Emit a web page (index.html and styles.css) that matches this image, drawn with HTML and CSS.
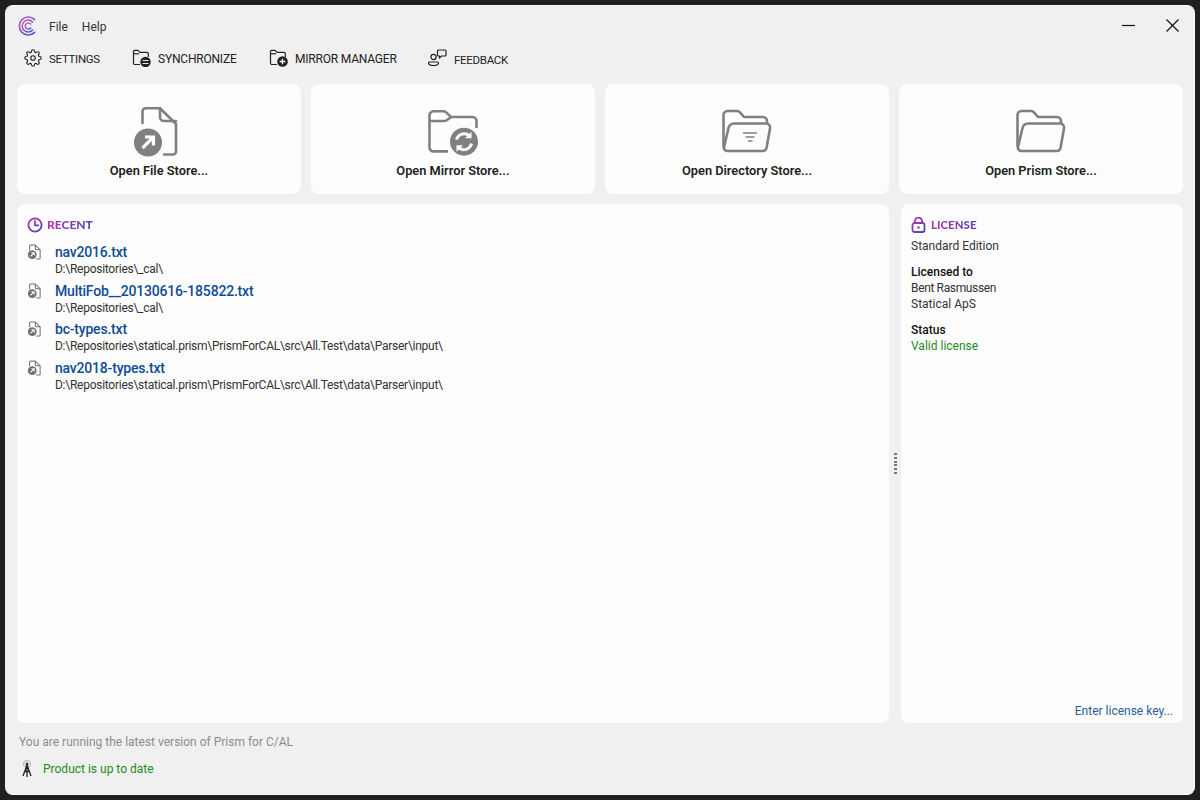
FILE: index.html
```html
<!DOCTYPE html>
<html lang="en">
<head>
<meta charset="utf-8">
<title>Prism for C/AL</title>
<link rel="stylesheet" href="styles.css">
</head>
<body>
<svg class="defs" width="0" height="0" aria-hidden="true">
  <defs>
    <linearGradient id="grad" x1="0" y1="0" x2="1" y2="1">
      <stop offset="0" stop-color="#b534b0"/>
      <stop offset="1" stop-color="#4a45b5"/>
    </linearGradient>
    <linearGradient id="logo" x1="0" y1="0" x2="1" y2="1">
      <stop offset="0" stop-color="#d65aa8"/>
      <stop offset="0.5" stop-color="#8a55c8"/>
      <stop offset="1" stop-color="#2f62d0"/>
    </linearGradient>
  </defs>
</svg>
<div class="window">
  <header class="titlebar">
    <svg class="logo" width="20" height="20" viewBox="0 0 20 20" fill="none" stroke="url(#logo)" stroke-linecap="round">
      <path d="M16.6 3.600A9 9 0 1 0 16.600 16.400" stroke-width="1.700"/>
      <path d="M14.600 6A6 6 0 1 0 14.600 14" stroke-width="1.500"/>
      <path d="M12.800 8A3.100 3.100 0 1 0 12.800 12" stroke-width="1.400"/>
    </svg>
    <nav class="menu"><span>File</span><span>Help</span></nav>
    <div class="controls">
      <svg width="13" height="3" viewBox="0 0 13 3"><path d="M0 1.500H13" stroke="#111" stroke-width="1.200"/></svg>
      <svg width="13" height="13" viewBox="0 0 13 13"><path d="M.5.5L12.500 12.500M12.500.5L.5 12.500" stroke="#111" stroke-width="1.200"/></svg>
    </div>
  </header>

  <nav class="toolbar">
    <div class="tool tool-settings">
      <svg width="18" height="18" viewBox="0 0 24 24" fill="none" stroke="#222" stroke-width="1.500" stroke-linejoin="round">
        <circle cx="12" cy="12" r="3"/>
        <path d="M19.400 15a1.650 1.650 0 0 0 .33 1.820l.06.06a2 2 0 0 1 0 2.830 2 2 0 0 1-2.830 0l-.06-.06a1.650 1.650 0 0 0-1.820-.33 1.650 1.650 0 0 0-1 1.510V21a2 2 0 0 1-2 2 2 2 0 0 1-2-2v-.09A1.650 1.650 0 0 0 9 19.400a1.650 1.650 0 0 0-1.820.33l-.06.06a2 2 0 0 1-2.830 0 2 2 0 0 1 0-2.830l.06-.06a1.650 1.650 0 0 0 .33-1.820 1.650 1.650 0 0 0-1.510-1H3a2 2 0 0 1-2-2 2 2 0 0 1 2-2h.09A1.650 1.650 0 0 0 4.600 9a1.650 1.650 0 0 0-.33-1.820l-.06-.06a2 2 0 0 1 0-2.830 2 2 0 0 1 2.830 0l.06.06a1.650 1.650 0 0 0 1.820.33H9a1.650 1.650 0 0 0 1-1.510V3a2 2 0 0 1 2-2 2 2 0 0 1 2 2v.09a1.650 1.650 0 0 0 1 1.510 1.650 1.650 0 0 0 1.820-.33l.06-.06a2 2 0 0 1 2.830 0 2 2 0 0 1 0 2.830l-.06.06a1.650 1.650 0 0 0-.33 1.820V9a1.650 1.650 0 0 0 1.510 1H21a2 2 0 0 1 2 2 2 2 0 0 1-2 2h-.09a1.650 1.650 0 0 0-1.510 1z"/>
      </svg>
      <span>SETTINGS</span>
    </div>
    <div class="tool tool-sync">
      <svg width="19" height="18" viewBox="0 0 19 18" fill="none" stroke="#222" stroke-width="1.200">
        <path d="M8 15.500H3a1.500 1.500 0 0 1-1.500-1.500V2.500A1.200 1.200 0 0 1 2.700 1.300H6L8 3.300h6.800a1.500 1.500 0 0 1 1.500 1.500V8"/>
        <path d="M1.500 4.800H7"/>
        <circle cx="13.500" cy="13" r="5.200" fill="#222" stroke="none"/>
        <path d="M10.500 11.500h6M10.500 14.500h6" stroke="#fff" stroke-width=".9"/>
      </svg>
      <span>SYNCHRONIZE</span>
    </div>
    <div class="tool tool-mirror">
      <svg width="19" height="18" viewBox="0 0 19 18" fill="none" stroke="#222" stroke-width="1.200">
        <path d="M8 15.500H3a1.500 1.500 0 0 1-1.500-1.500V2.500A1.200 1.200 0 0 1 2.700 1.300H6L8 3.300h6.800a1.500 1.500 0 0 1 1.500 1.500V8"/>
        <path d="M1.500 4.800H7"/>
        <circle cx="13.500" cy="12.500" r="5.300" fill="#222" stroke="none"/>
        <path d="M13.500 9.700v5.600M10.700 12.500h5.600" stroke="#fff" stroke-width="1.300"/>
      </svg>
      <span>MIRROR MANAGER</span>
    </div>
    <div class="tool tool-feedback">
      <svg width="19" height="18" viewBox="0 0 19 18" fill="none" stroke="#222" stroke-width="1.200" stroke-linejoin="round">
        <circle cx="5.500" cy="8" r="2.600"/>
        <path d="M1.500 13h8a1 1 0 0 1 1 1c0 1.500-1.500 2.500-5 2.500s-5-1-5-2.500a1 1 0 0 1 1-1z"/>
        <path d="M10.500 1h6.500a1 1 0 0 1 1 1v4a1 1 0 0 1-1 1h-3.500l-2 2V7h-1a1 1 0 0 1-1-1V2a1 1 0 0 1 1-1z"/>
      </svg>
      <span>FEEDBACK</span>
    </div>
  </nav>

  <section class="tiles">
    <button class="tile">
      <svg width="52" height="52" viewBox="0 0 52 52" fill="none" stroke="#808080" stroke-width="2.600" stroke-linejoin="round" stroke-linecap="round">
        <path d="M9.500 18V6.300a3 3 0 0 1 3-3H27L43 19v27.500a3 3 0 0 1-3 3H31"/>
        <path d="M27 3.300V12a4 4 0 0 0 4 4h12"/>
        <circle cx="15" cy="37.500" r="14" fill="#808080" stroke="none"/>
        <path d="M9.500 43L20 32.500M12 32h8.500v8.500" stroke="#fff" stroke-width="3.200" stroke-linecap="butt" stroke-linejoin="miter"/>
      </svg>
      <span>Open File Store...</span>
    </button>
    <button class="tile">
      <svg width="52" height="52" viewBox="0 0 52 52" fill="none" stroke="#808080" stroke-width="2.600" stroke-linejoin="round">
        <path d="M21 46.400H6.500a4 4 0 0 1-4-4V10.300a4 4 0 0 1 4-4h10a4 4 0 0 1 3 1.300L24 12h21.500a4 4 0 0 1 4 4v7"/>
        <path d="M2.500 16h15a4 4 0 0 0 3-1.300L24 12"/>
        <circle cx="37" cy="36.700" r="14" fill="#808080" stroke="none"/>
        <path d="M29.500 34.700a8 8 0 0 1 13-4" stroke="#fff" stroke-width="3"/>
        <path d="M44.500 38.700a8 8 0 0 1-13 4" stroke="#fff" stroke-width="3"/>
        <path d="M44.500 26.700v6.500H38zM29.500 46.700v-6.500H36z" fill="#fff" stroke="none"/>
      </svg>
      <span>Open Mirror Store...</span>
    </button>
    <button class="tile">
      <svg width="52" height="52" viewBox="0 0 52 52" fill="none" stroke="#808080" stroke-width="2.600" stroke-linejoin="round">
        <path d="M2.500 42V10a4 4 0 0 1 4-4h9.500a4 4 0 0 1 3 1.300L23 12h19a4 4 0 0 1 4 4v2.500"/>
        <path d="M2.800 43L7.500 23a6 6 0 0 1 5.500-4.500H45a4 4 0 0 1 4 5l-3.500 19.500a4 4 0 0 1-4 3H7a4 4 0 0 1-4.200-3z"/>
        <path d="M22 28h14M24.500 32h9M27 36h4.500" stroke-width="1.700"/>
      </svg>
      <span>Open Directory Store...</span>
    </button>
    <button class="tile">
      <svg width="52" height="52" viewBox="0 0 52 52" fill="none" stroke="#808080" stroke-width="2.600" stroke-linejoin="round">
        <path d="M2.500 42V10a4 4 0 0 1 4-4h9.500a4 4 0 0 1 3 1.300L23 12h19a4 4 0 0 1 4 4v2.500"/>
        <path d="M2.800 43L7.500 23a6 6 0 0 1 5.500-4.500H45a4 4 0 0 1 4 5l-3.500 19.500a4 4 0 0 1-4 3H7a4 4 0 0 1-4.200-3z"/>
      </svg>
      <span>Open Prism Store...</span>
    </button>
  </section>

  <main class="panels">
    <section class="panel recent">
      <h2 class="heading">
        <svg width="16" height="16" viewBox="0 0 16 16" fill="none" stroke="url(#grad)" stroke-width="1.800" stroke-linecap="round" stroke-linejoin="round">
          <circle cx="8" cy="8" r="6.600"/><path d="M8 4v4.300h3.300"/>
        </svg>
        <span class="grad">RECENT</span>
      </h2>
      <ul class="files">
        <li class="file">
          <svg class="file-icon" width="14" height="16" viewBox="0 0 16 18" fill="none" stroke="#707070" stroke-width="1.200" stroke-linejoin="round"><path d="M3 7V2a1 1 0 0 1 1-1h5.500L15 6.500V16a1 1 0 0 1-1 1h-3.500"/><path d="M9.500 1v4a1.500 1.500 0 0 0 1.500 1.500h4"/><circle cx="6" cy="12" r="5" fill="#707070" stroke="none"/><path d="M4 14l4-4M5 9.800h3.200V13" stroke="#fff"/></svg>
          <div><a class="file-name">nav2016.txt</a><div class="file-path">D:\Repositories\_cal\</div></div>
        </li>
        <li class="file">
          <svg class="file-icon" width="14" height="16" viewBox="0 0 16 18" fill="none" stroke="#707070" stroke-width="1.200" stroke-linejoin="round"><path d="M3 7V2a1 1 0 0 1 1-1h5.500L15 6.500V16a1 1 0 0 1-1 1h-3.500"/><path d="M9.500 1v4a1.500 1.500 0 0 0 1.500 1.500h4"/><circle cx="6" cy="12" r="5" fill="#707070" stroke="none"/><path d="M4 14l4-4M5 9.800h3.200V13" stroke="#fff"/></svg>
          <div><a class="file-name">MultiFob__20130616-185822.txt</a><div class="file-path">D:\Repositories\_cal\</div></div>
        </li>
        <li class="file">
          <svg class="file-icon" width="14" height="16" viewBox="0 0 16 18" fill="none" stroke="#707070" stroke-width="1.200" stroke-linejoin="round"><path d="M3 7V2a1 1 0 0 1 1-1h5.500L15 6.500V16a1 1 0 0 1-1 1h-3.500"/><path d="M9.500 1v4a1.500 1.500 0 0 0 1.500 1.500h4"/><circle cx="6" cy="12" r="5" fill="#707070" stroke="none"/><path d="M4 14l4-4M5 9.800h3.200V13" stroke="#fff"/></svg>
          <div><a class="file-name">bc-types.txt</a><div class="file-path">D:\Repositories\statical.prism\PrismForCAL\src\All.Test\data\Parser\input\</div></div>
        </li>
        <li class="file">
          <svg class="file-icon" width="14" height="16" viewBox="0 0 16 18" fill="none" stroke="#707070" stroke-width="1.200" stroke-linejoin="round"><path d="M3 7V2a1 1 0 0 1 1-1h5.500L15 6.500V16a1 1 0 0 1-1 1h-3.500"/><path d="M9.500 1v4a1.500 1.500 0 0 0 1.500 1.500h4"/><circle cx="6" cy="12" r="5" fill="#707070" stroke="none"/><path d="M4 14l4-4M5 9.800h3.200V13" stroke="#fff"/></svg>
          <div><a class="file-name">nav2018-types.txt</a><div class="file-path">D:\Repositories\statical.prism\PrismForCAL\src\All.Test\data\Parser\input\</div></div>
        </li>
      </ul>
    </section>
    <div class="splitter"><i></i><i></i><i></i><i></i><i></i><i></i></div>
    <aside class="panel license">
      <h2 class="heading">
        <svg width="15" height="16" viewBox="0 0 15 16" fill="none" stroke="url(#grad)" stroke-width="1.800" stroke-linejoin="round">
          <rect x="1.500" y="6" width="12" height="9" rx="2"/><path d="M4 6V4a3.500 3.500 0 0 1 7 0v2"/><circle cx="7.500" cy="10.500" r="1.200" fill="#8040b0" stroke="none"/>
        </svg>
        <span class="grad">LICENSE</span>
      </h2>
      <p class="info">Standard Edition</p>
      <p class="info group"><b>Licensed to</b><br><span class="holder">Bent Rasmussen</span><br>Statical ApS</p>
      <p class="info group"><b>Status</b><br><span class="ok">Valid license</span></p>
      <a class="key">Enter license key...</a>
    </aside>
  </main>

  <footer class="footer">
    <div class="version">You are running the latest version of Prism for C/AL</div>
    <div class="status">
      <svg width="16" height="18" viewBox="0 0 16 18" fill="none" stroke="#222" stroke-width="1">
        <circle cx="8" cy="4" r="3.500" stroke="#aaa"/><circle cx="8" cy="4" r="1.500" fill="#333" stroke="none"/>
        <path d="M8 5L4 16M8 5l4 11M8 5v12M5.500 11.500h5" stroke-width="1.300"/>
      </svg>
      <span>Product is up to date</span>
    </div>
  </footer>
</div>
</body>
</html>
```
FILE: styles.css
```css
* { box-sizing: border-box; }
html, body { margin: 0; height: 100%; }
body {
  background: #202020;
  padding: 5px;
  font-family: Roboto, "Open Sans", sans-serif;
  font-size: 12px;
  color: #222;
  overflow: hidden;
}
.defs { position: absolute; }
.window {
  height: 790px;
  background: #f0f0f0;
  border-radius: 8px;
  border-top: 1px solid #fafafa;
  border-right: 1px solid #fafafa;
  border-bottom: 1px solid #fafafa;
  display: flex;
  flex-direction: column;
  padding: 0 11px 0 12px;
}
.titlebar {
  height: 40px;
  display: flex;
  align-items: center;
  padding: 0 0 0 1px;
}
.logo { flex: none; }
.menu { display: flex; gap: 14px; margin: 1px 0 0 11px; font-size: 12px; color: #333; }
.controls {
  margin-left: auto;
  display: flex;
  align-items: center;
  gap: 31px;
  padding: 0 4px 2px 0;
}
.toolbar {
  height: 28px;
  display: flex;
  align-items: center;
  padding-left: 7px;
  margin-top: -2px;
  margin-bottom: 12px;
  font-size: 12px;
  letter-spacing: -.2px;
  color: #222;
}
.tool { display: flex; align-items: center; gap: 7px; }
.tool span { margin-top: 1px; }
.tool-settings { width: 108px; font-size: 11.500px; letter-spacing: -.3px; }
.tool-sync { width: 137px; }
.tool-mirror { width: 159px; }
.tool-feedback { font-size: 11.500px; letter-spacing: -.3px; }
.tool-feedback span { margin-top: 3px; }
.tiles {
  display: grid;
  grid-template-columns: repeat(4, 284px);
  gap: 10px;
  margin-bottom: 10px;
}
.tile {
  height: 110px;
  border: 0;
  border-radius: 8px;
  background: #fdfdfd;
  font: inherit;
  font-size: 12.800px;
  font-weight: 600;
  color: #222;
  display: flex;
  flex-direction: column;
  align-items: center;
  padding: 21px 0 0;
  gap: 6px;
}
.panels { height: 519px; display: flex; }
.panel {
  background: #fdfdfd;
  border-radius: 8px;
  padding: 13px 10px;
}
.recent { width: 872px; }
.license { width: 282px; position: relative; }
.splitter {
  width: 12px;
  display: flex;
  flex-direction: column;
  align-items: center;
  justify-content: center;
  gap: 1.800px;
}
.splitter i { width: 3px; height: 2px; background: #777; display: block; }
.heading {
  margin: 0;
  display: flex;
  align-items: center;
  gap: 5px;
  height: 16px;
  font-family: Lato, Roboto, sans-serif;
  font-size: 11.500px;
  font-weight: 900;
}
.heading .grad { margin-top: -1px; }
.recent .heading { gap: 4px; font-size: 12px; }
.grad {
  background: linear-gradient(90deg, #b534b0, #5a45b5);
  -webkit-background-clip: text;
  background-clip: text;
  color: transparent;
}
.files { list-style: none; margin: 10px 0 0; padding: 0; }
.file { display: flex; gap: 14px; height: 38.600px; }
.file-icon { margin-top: 1px; flex: none; }
.file-name { font-size: 14px; letter-spacing: -.2px; font-weight: 500; color: #0f4c96; line-height: 19px; display: block; }
.file-path { font-size: 12px; letter-spacing: -.26px; line-height: 15px; color: #333; }
.info { margin: 0; line-height: 16px; color: #333; }
.license .heading + .info { margin-top: 5px; }
.license .group { margin-top: 10px; }
.group b { font-weight: 500; color: #111; }
.holder { letter-spacing: -.35px; }
.ok { color: #1f8a1f; }
.key { position: absolute; right: 10px; bottom: 5px; color: #2a6099; }
.footer { padding: 11px 2px 0; }
.version { color: #8c8c8c; line-height: 16px; }
.status { display: flex; align-items: center; gap: 8px; margin-top: 10px; color: #1f8a1f; }
```
